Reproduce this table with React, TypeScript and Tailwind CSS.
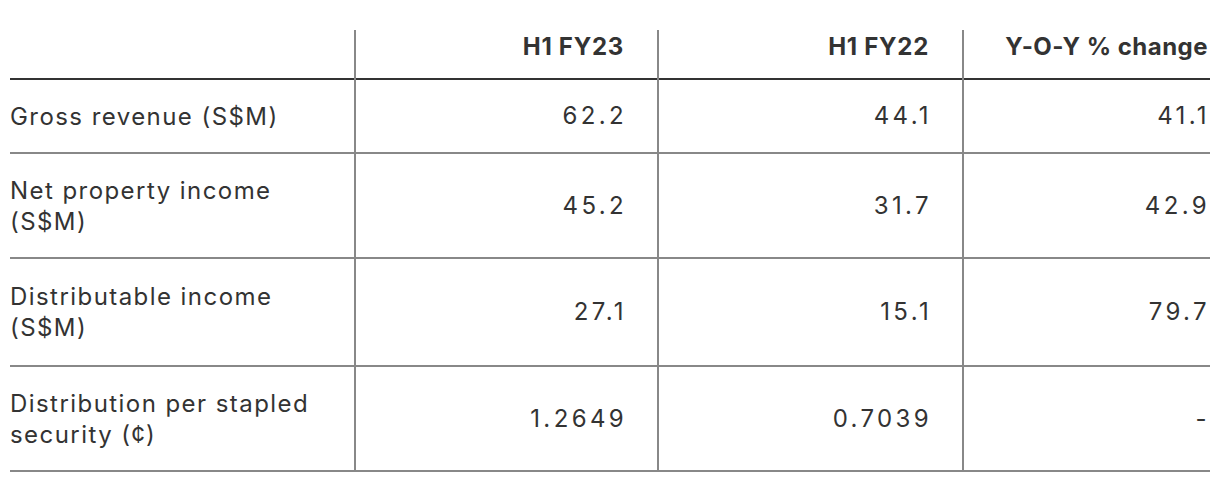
const rows = [
  { label: "Gross revenue (S$M)", a: "62.2", b: "44.1", c: "41.1", h: "h-[74px]" },
  { label: "Net property income (S$M)", a: "45.2", b: "31.7", c: "42.9", h: "h-[105px]" },
  { label: "Distributable income (S$M)", a: "27.1", b: "15.1", c: "79.7", h: "h-[108px]" },
  { label: "Distribution per stapled security (¢)", a: "1.2649", b: "0.7039", c: "-", h: "h-[105px]" },
];

export default function App() {
  return (
    <div className="bg-white w-[1220px] h-[482px] pt-[30px] pl-[10px] text-[#333333] font-['Inter',sans-serif]">
      <table className="w-[1200px] border-collapse table-fixed">
        <colgroup>
          <col className="w-[345px]" />
          <col className="w-[303px]" />
          <col className="w-[305px]" />
          <col className="w-[247px]" />
        </colgroup>
        <thead>
          <tr className="h-[49px] border-b-2 border-[#333333]">
            <th className="border-r-2 border-[#888888]"></th>
            <th className="border-r-2 border-[#888888] text-right pr-[33px] pt-[5px] text-[24px] leading-[24px] font-bold tracking-[0.03em] align-top">
              H1 FY23
            </th>
            <th className="border-r-2 border-[#888888] text-right pr-[33px] pt-[5px] text-[24px] leading-[24px] font-bold tracking-[0.03em] align-top">
              H1 FY22
            </th>
            <th className="text-right pr-[2px] pt-[5px] text-[24px] leading-[24px] font-bold tracking-[0.02em] align-top">
              Y-O-Y % change
            </th>
          </tr>
        </thead>
        <tbody>
          {rows.map((r) => (
            <tr key={r.label} className={`${r.h} border-b-2 border-[#888888]`}>
              <td className="border-r-2 border-[#888888] pr-[20px] text-[24px] leading-[31px] tracking-[0.06em] align-middle">
                {r.label}
              </td>
              <td className="border-r-2 border-[#888888] text-right pr-[30px] text-[24px] tracking-[0.14em] align-middle">
                {r.a}
              </td>
              <td className="border-r-2 border-[#888888] text-right pr-[30px] text-[24px] tracking-[0.14em] align-middle">
                {r.b}
              </td>
              <td className="text-right pr-0 text-[24px] tracking-[0.14em] align-middle">{r.c}</td>
            </tr>
          ))}
        </tbody>
      </table>
    </div>
  );
}
